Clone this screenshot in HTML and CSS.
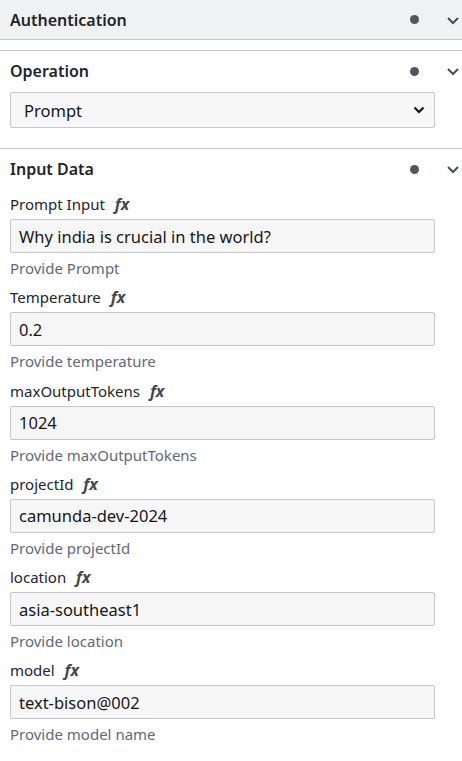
FILE: index.html
```html
<!DOCTYPE html>
<html>
<head>
<meta charset="utf-8">
<link rel="stylesheet" href="styles.css">
</head>
<body>
<div class="panel">
  <div class="group">
    <div class="group-header sticky">
      <span class="title">Authentication</span>
      <span class="actions"><span class="dot"></span><svg class="chev" width="16" height="16" viewBox="0 0 16 16"><path d="M3 6l5 5 5-5" fill="none" stroke="#4a4c55" stroke-width="2"/></svg></span>
    </div>
    <div class="spacer"></div>
  </div>

  <div class="group">
    <div class="group-header">
      <span class="title">Operation</span>
      <span class="actions"><span class="dot"></span><svg class="chev" width="16" height="16" viewBox="0 0 16 16"><path d="M3 6l5 5 5-5" fill="none" stroke="#4a4c55" stroke-width="2"/></svg></span>
    </div>
    <div class="group-body op-body">
      <div class="select">
        <span>Prompt</span>
        <svg width="14" height="14" viewBox="0 0 14 14"><path d="M2.5 4.5l4.5 4.5 4.5-4.5" fill="none" stroke="#111" stroke-width="2.2"/></svg>
      </div>
    </div>
  </div>

  <div class="group last">
    <div class="group-header">
      <span class="title">Input Data</span>
      <span class="actions"><span class="dot"></span><svg class="chev" width="16" height="16" viewBox="0 0 16 16"><path d="M3 6l5 5 5-5" fill="none" stroke="#4a4c55" stroke-width="2"/></svg></span>
    </div>
    <div class="group-body">
      <div class="field">
        <div class="label">Prompt Input <span class="fx">fx</span></div>
        <div class="input">Why india is crucial in the world?</div>
        <div class="desc">Provide Prompt</div>
      </div>
      <div class="field">
        <div class="label">Temperature <span class="fx">fx</span></div>
        <div class="input">0.2</div>
        <div class="desc">Provide temperature</div>
      </div>
      <div class="field">
        <div class="label">maxOutputTokens <span class="fx">fx</span></div>
        <div class="input">1024</div>
        <div class="desc">Provide maxOutputTokens</div>
      </div>
      <div class="field">
        <div class="label">projectId <span class="fx">fx</span></div>
        <div class="input">camunda-dev-2024</div>
        <div class="desc">Provide projectId</div>
      </div>
      <div class="field">
        <div class="label">location <span class="fx">fx</span></div>
        <div class="input">asia-southeast1</div>
        <div class="desc">Provide location</div>
      </div>
      <div class="field">
        <div class="label">model <span class="fx">fx</span></div>
        <div class="input">text-bison@002</div>
        <div class="desc">Provide model name</div>
      </div>
    </div>
  </div>
</div>
</body>
</html>
```

FILE: styles.css
```css
html, body {
  margin: 0;
  padding: 0;
  background: #ffffff;
}
body {
  font-family: "Noto Sans", "Liberation Sans", sans-serif;
  color: #22242a;
  width: 462px;
  overflow: hidden;
}
.panel {
  display: flex;
  flex-direction: column;
}
.group {
  border-bottom: 1px solid #c4c6cd;
}
.group.last {
  border-bottom: none;
}
.group-header {
  height: 40px;
  display: flex;
  align-items: center;
  justify-content: space-between;
  padding-left: 10px;
  box-sizing: border-box;
}
.group-header.sticky {
  background: #f0f1f3;
  border-bottom: 1px solid #c4c6cd;
  height: 40px;
}
.title {
  font-size: 16px;
  font-weight: 600;
  color: #22242a;
}
.actions {
  display: flex;
  align-items: center;
  gap: 26px;
  padding-right: 1px;
}
.dot {
  width: 9px;
  height: 9px;
  border-radius: 50%;
  background: #52555f;
}
.chev {
  display: block;
}
.spacer {
  height: 10px;
}
.group-body {
  padding: 0 27px 0 10px;
}
.op-body {
  padding-top: 1px;
  padding-bottom: 20px;
}
.select {
  height: 36px;
  box-sizing: border-box;
  border: 1px solid #c4c6cd;
  border-radius: 2px;
  background: #f7f7f8;
  display: flex;
  align-items: center;
  justify-content: space-between;
  padding: 0 8px 0 13px;
  font-size: 16.5px;
  color: #161616;
}
.field {
  padding-top: 5px;
  padding-bottom: 4.3px;
}
.label {
  font-size: 15px;
  line-height: 20px;
  color: #22242a;
  margin-bottom: 5px;
}
.fx {
  font-style: italic;
  font-weight: 700;
  color: #45474f;
  margin-left: 6px;
  font-size: 16px;
}
.input {
  height: 34px;
  box-sizing: border-box;
  border: 1px solid #c4c6cd;
  border-radius: 2px;
  background: #f6f6f7;
  display: flex;
  align-items: center;
  padding: 0 8px;
  font-size: 16.5px;
  color: #161616;
}
.desc {
  margin-top: 5px;
  font-size: 15px;
  line-height: 20px;
  color: #626875;
}
```
